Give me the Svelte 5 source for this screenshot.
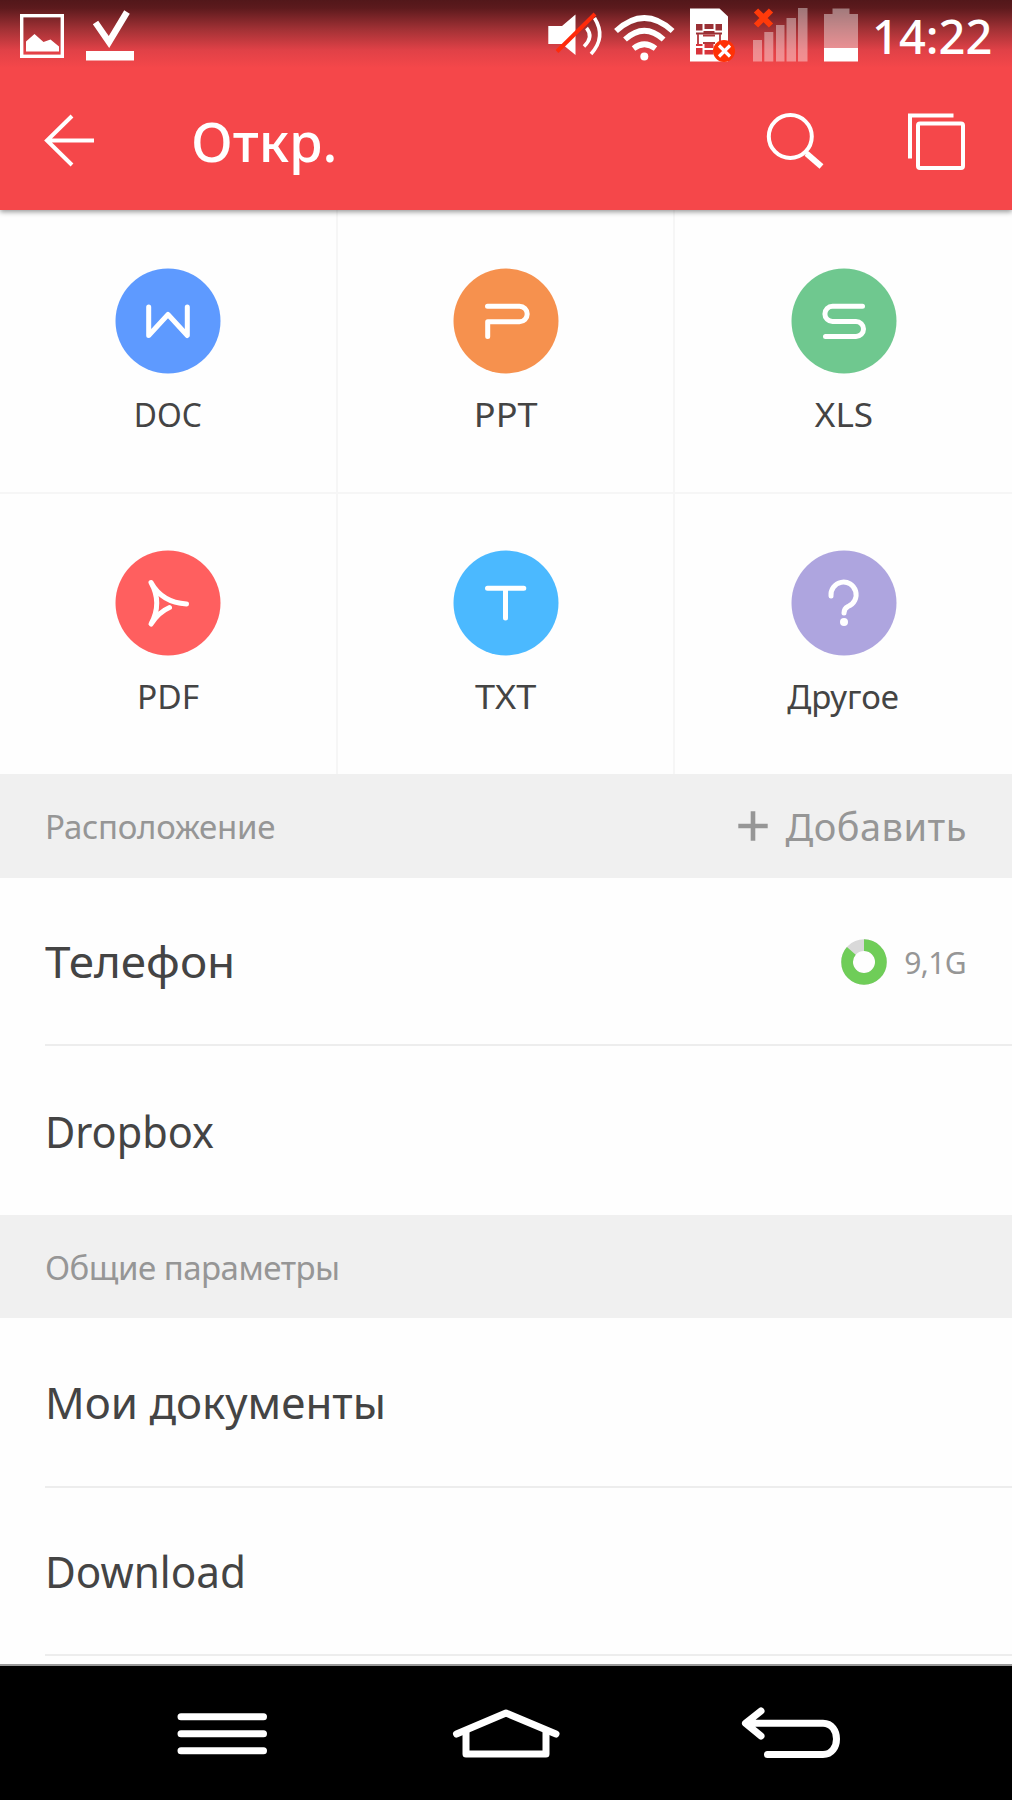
<script>
  // `stretch` adjusts the horizontal proportions of each label
  const types = [
    { label: 'DOC', color: '#5e9aff', icon: 'doc', stretch: 0.975 },
    { label: 'PPT', color: '#f6914e', icon: 'ppt', stretch: 1.11 },
    { label: 'XLS', color: '#6fc88f', icon: 'xls', stretch: 1.08 },
    { label: 'PDF', color: '#ff5f5f', icon: 'pdf', stretch: 1.03 },
    { label: 'TXT', color: '#4bb9ff', icon: 'txt', stretch: 1.11 },
    { label: 'Другое', color: '#aea5df', icon: 'other', stretch: 1.015 },
  ];
  const bars = [[753, 40, 9], [764.3, 32, 9], [776, 25, 8.5], [786.5, 18, 9.5], [798, 8, 9.5]];
</script>

<div class="screen">
  <header>
    <div class="status">
      <svg width="128" height="60" viewBox="12 5 128 60" class="notes">
        <rect x="21.7" y="15.7" width="40.6" height="40.6" fill="none" stroke="#fff" stroke-width="3.4" />
        <path d="M26 51.5V41.5L34.5 34L43.5 42L50.5 39.5L59 46.5V51.5Z" fill="#fff" />
        <path d="M95.5 22.5L109 42L127 12" fill="none" stroke="#fff" stroke-width="6.5" />
        <rect x="86" y="51" width="48" height="9.5" fill="#fff" />
      </svg>
      <svg width="320" height="60" viewBox="544 5 320 60">
        <path d="M548.3 26H562L575.5 14.5V55L562 44H548.3Z" fill="#fff" />
        <path d="M586.5 28Q594 37 584 46.5M594.5 18Q606.5 37 591 54" fill="none" stroke="#fff" stroke-width="3.6" />
        <path d="M557 51.5L595 14" stroke="#ff2a0a" stroke-width="4" />
        <path
          d="M616 31Q644.3 5 672.6 31M625 39.5Q644.3 22 663.6 39.5M633.5 48.5Q644.3 40 655.5 48.5"
          fill="none" stroke="#fff" stroke-width="5.6"
        />
        <circle cx="644.3" cy="56.5" r="4" fill="#fff" />
        <path d="M690 8.5H719.5L728 16.5V61.5H690Z" fill="#fff" />
        <rect x="696" y="24" width="26" height="10.5" fill="#9a3035" />
        <rect x="696" y="44" width="26" height="10.5" fill="#d8343b" />
        <path
          d="M703.5 24V30H714.5V24M696 31.5H703.5M714.5 31.5H722M696 47H703.5V44M714.5 44V47H722M703.5 55V49H714.5V55"
          fill="none" stroke="#fff" stroke-width="2"
        />
        <path d="M698 34V44M720 34V44M703 35.5H715M703 43H715" stroke="#b3383d" stroke-width="1.8" />
        <circle cx="724" cy="51" r="11" fill="#ff3205" />
        <path d="M719 45.5L730 56.5M730 45.5L719 56.5" stroke="#fff" stroke-width="3.2" />
        <path d="M756 10.5L771 25.5M771 10.5L756 25.5" stroke="#ff3a0a" stroke-width="6" />
        {#each bars as [x, y, w]}
          <rect {x} {y} width={w} height={61.5 - y} fill="#fff" fill-opacity="0.4" />
        {/each}
        <path d="M824 48V14H832.5V8.5H849.5V14H858V48Z" fill="#fff" fill-opacity="0.42" />
        <rect x="824" y="48" width="34" height="13.5" fill="#fff" />
      </svg>
      <time>14:22</time>
    </div>
    <div class="bar">
      <svg width="60" height="60" viewBox="40 111 60 60" fill="none" stroke="#fff" stroke-width="4">
        <path d="M94 140.5H47M72 116L47 140.5L72 165" />
      </svg>
      <h1>Откр.</h1>
      <svg width="220" height="70" viewBox="750 105 220 70" fill="none" stroke="#fff" stroke-width="4">
        <circle cx="790.3" cy="135.5" r="21.5" />
        <path d="M804.5 150L808 153" />
        <path d="M806.5 152.5L821.5 165.5" stroke-width="6" />
        <path d="M910 157.500V114.500H953.500" />
        <rect x="918" y="122.500" width="45" height="44.500" rx="2" />
      </svg>
    </div>
  </header>

  <main>
    <div class="grid">
      {#each types as t}
        <div class="cell">
          <svg width="106" height="106" viewBox="-53 -53 106 106" fill="none" stroke="#fff" stroke-width="5" stroke-linecap="round" stroke-linejoin="round">
            <circle r="52.500" fill={t.color} stroke="none" />
            {#if t.icon === 'doc'}
              <path d="M-19.300 -14V14.500L0 -6.500L19.300 14.500V-14" />
            {:else if t.icon === 'ppt'}
              <path d="M-18.500 -14.700H13.500A7.700 7.700 0 0 1 13.500 0.700H-18.300V15.500" />
            {:else if t.icon === 'xls'}
              <path d="M18.500 -14.700H-11.500A7.600 7.600 0 0 0 -11.500 0.500H12A7.500 7.500 0 0 1 12 15.500H-18.500" />
            {:else if t.icon === 'pdf'}
              <path d="M1.500 4.500Q-9 9 -17 21Q-5.500 0 -17 -20.500Q-6 -0.500 18.500 1" />
            {:else if t.icon === 'txt'}
              <path d="M-18.500 -14.700H17.800M-0.500 -14.700V15" />
            {:else}
              <path d="M-13 -7A12.600 12.600 0 1 1 4 3.500Q0 5.500 0 10" />
              <circle cy="19" r="4" fill="#fff" stroke="none" />
            {/if}
          </svg>
          <span style:--stretch={t.stretch}>{t.label}</span>
        </div>
      {/each}
    </div>

    <div class="section locations">
      <span class="caption">Расположение</span>
      <span class="add">
        <svg width="30" height="30" viewBox="-15 -15 30 30" stroke="#969696" stroke-width="4.600"><path d="M-14.700 0H14.700M0 -14.700V14.700" /></svg>
        <span>Добавить</span>
      </span>
    </div>
    <div class="row lined phone">
      <span class="name">Телефон</span>
      <span class="usage">
        <svg width="46" height="46" viewBox="-23 -23 46 46" fill="none" stroke-width="11.700">
          <circle r="16.900" stroke="#d9d9d9" />
          <circle r="16.900" stroke="#6fcd58" pathLength="100" stroke-dasharray="86.500 13.500" transform="rotate(-90)" />
        </svg>
        <span>9,1G</span>
      </span>
    </div>
    <div class="row dropbox"><span class="name">Dropbox</span></div>
    <div class="section common"><span class="caption">Общие параметры</span></div>
    <div class="row lined docs"><span class="name">Мои документы</span></div>
    <div class="row lined downloads"><span class="name">Download</span></div>
  </main>

  <nav>
    <svg width="1012" height="134" viewBox="0 1666 1012 134" fill="none" stroke="#fff" stroke-width="7" stroke-linecap="round" stroke-linejoin="round">
      <path d="M181 1716.700H263.500M181 1733.700H263.500M181 1750.700H263.500" />
      <path d="M456.500 1734L506 1713L556 1734" />
      <path d="M466 1732V1754H546V1732" />
      <path d="M761 1711L745.500 1723.300L761 1736M747 1723.300H823C841 1723.300 841 1754.500 823 1754.500H767.500" />
    </svg>
  </nav>
</div>

<style>
  :global(body) { margin: 0; }
  .screen {
    width: 1012px;
    height: 1800px;
    display: flex;
    flex-direction: column;
    overflow: hidden;
    background: #fefefe;
    color: #444;
    font-family: 'Noto Sans', 'Open Sans', sans-serif;
    white-space: nowrap;
  }
  header {
    height: 210px;
    flex: none;
    color: #fff;
    background: linear-gradient(#52171a 0, #5c1a1d 8px, #a43236 30px, #e04147 50px, #f5474a 68px);
    box-shadow: 0 2px 5px rgba(0, 0, 0, 0.4);
    position: relative;
  }
  .status { display: flex; align-items: center; height: 70px; padding-left: 12px; }
  .notes { margin-right: 404px; }
  .status time { padding-top: 2px; font-size: 47px; font-weight: 500; margin-left: 8px; }
  .bar { display: flex; align-items: center; height: 141px; padding: 0 42px 0 40px; }
  h1 { margin: 0 auto 0 91px; font-size: 54.5px; font-weight: 500; }
  main { flex: 1; }
  .grid { display: grid; grid-template-columns: 338px 337px 337px; grid-template-rows: 284px 280px; }
  .cell {
    display: flex;
    flex-direction: column;
    align-items: center;
    padding-top: 58px;
    gap: 17px;
    box-sizing: border-box;
    border-right: 2px solid #f6f6f6;
    border-bottom: 2px solid #f6f6f6;
  }
  .cell:nth-child(3n) { border-right: 0; }
  .cell:nth-child(n + 4) { border-bottom: 0; padding-top: 56px; }
  .cell span { font-size: 32.5px; line-height: 47px; transform: scaleX(var(--stretch)); }
  .section {
    display: flex;
    justify-content: space-between;
    align-items: center;
    padding: 0 45px;
    background: #f0f0f0;
    color: #969696;
  }
  .locations { height: 104px; }
  .common { height: 103px; }
  .caption { padding-top: 1px; font-size: 33px; letter-spacing: -0.25px; }
  .common .caption { letter-spacing: -0.5px; }
  .add { display: flex; align-items: center; gap: 18px; font-size: 38px; letter-spacing: 0.5px; }
  .row {
    display: flex;
    justify-content: space-between;
    align-items: center;
    height: 168px;
    margin-left: 45px;
    padding-right: 45px;
    font-size: 44px;
    box-sizing: border-box;
  }
  .dropbox { height: 169px; }
  .docs { height: 170px; }
  .name { transform-origin: left; }
  .phone .name { transform: scaleX(1.042); }
  .dropbox .name { transform: scaleX(0.943); }
  .docs .name { transform: scaleX(0.996); }
  .downloads .name { transform: scaleX(0.96); }
  .lined { border-bottom: 2px solid #ededed; }
  .usage { display: flex; align-items: center; gap: 17px; padding: 2px 1px 0 0; font-size: 30px; letter-spacing: -0.6px; color: #969696; }
  nav { height: 136px; flex: none; background: #000; border-top: 2px solid #999; box-sizing: border-box; }
  nav svg { display: block; }
</style>
